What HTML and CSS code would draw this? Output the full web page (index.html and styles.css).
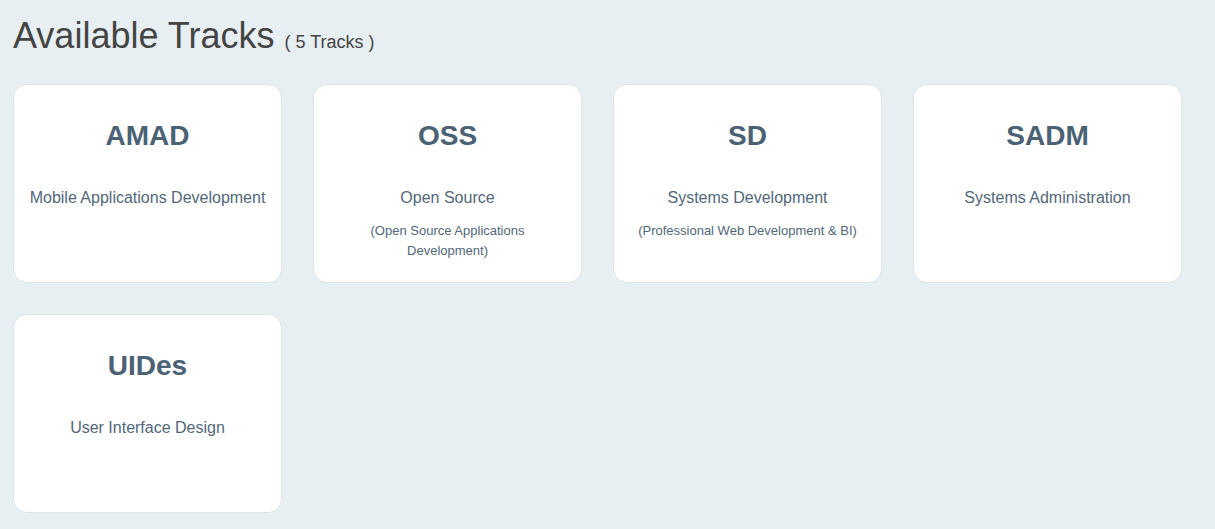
FILE: index.html
```html
<!DOCTYPE html>
<html>
<head>
<meta charset="utf-8">
<link rel="stylesheet" href="styles.css">
</head>
<body>
<div class="page">
  <h1 class="page-title">Available Tracks <span class="count">( 5 Tracks )</span></h1>
  <div class="tracks">
    <div class="card">
      <h3 class="code">AMAD</h3>
      <p class="name">Mobile Applications Development</p>
    </div>
    <div class="card">
      <h3 class="code">OSS</h3>
      <p class="name">Open Source</p>
      <p class="detail">(Open Source Applications<br>Development)</p>
    </div>
    <div class="card">
      <h3 class="code">SD</h3>
      <p class="name">Systems Development</p>
      <p class="detail">(Professional Web Development &amp; BI)</p>
    </div>
    <div class="card">
      <h3 class="code">SADM</h3>
      <p class="name">Systems Administration</p>
    </div>
    <div class="card">
      <h3 class="code">UIDes</h3>
      <p class="name">User Interface Design</p>
    </div>
  </div>
</div>
</body>
</html>
```
FILE: styles.css
```css
html, body {
  margin: 0;
  padding: 0;
  background: #e8eff3;
  font-family: "Liberation Sans", Arial, sans-serif;
}
.page {
  padding: 15px 13px 0 13px;
}
.page-title {
  margin: 0 0 21px 0;
  font-size: 36px;
  font-weight: normal;
  line-height: 41px;
  color: #444444;
}
.count {
  font-size: 18px;
  color: #444444;
}
.tracks {
  display: grid;
  grid-template-columns: repeat(4, 269px);
  grid-auto-rows: 199px;
  column-gap: 31px;
  row-gap: 31px;
}
.card {
  box-sizing: border-box;
  background: #ffffff;
  border: 1px solid #dfe4e8;
  border-radius: 14px;
  padding: 35px 10px 10px;
  text-align: center;
}
.code {
  margin: 0 0 37px;
  font-size: 28px;
  line-height: 32px;
  font-weight: bold;
  color: #4b6174;
}
.name {
  margin: 0;
  font-size: 16px;
  line-height: 18px;
  color: #52677a;
}
.detail {
  margin: 14px 0 0;
  font-size: 13px;
  line-height: 20px;
  color: #52677a;
}
```
